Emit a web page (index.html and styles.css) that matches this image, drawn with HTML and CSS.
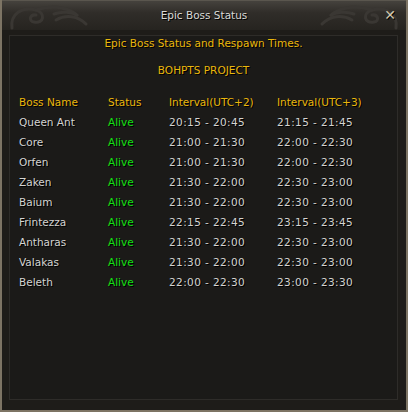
FILE: index.html
```html
<!DOCTYPE html>
<html lang="en">
<head>
    <meta charset="UTF-8">
    <title>Epic Boss Status</title>
    <link rel="stylesheet" href="styles.css">
</head>
<body>
    <div class="window">
        <div class="titlebar">
            <svg class="swirl swirl-left" width="90" height="28" viewBox="0 0 90 28">
                <path d="M6 26 C4 12 16 4 30 8 C40 11 38 22 28 20 C22 19 24 12 30 13" />
                <path d="M30 8 C48 2 64 6 72 14 C66 10 56 9 48 12" />
                <path d="M50 18 C60 12 72 14 80 22" />
            </svg>
            <span class="title">Epic Boss Status</span>
            <svg class="swirl swirl-right" width="90" height="28" viewBox="0 0 90 28">
                <path d="M84 26 C86 12 74 4 60 8 C50 11 52 22 62 20 C68 19 66 12 60 13" />
                <path d="M60 8 C42 2 26 6 18 14 C24 10 34 9 42 12" />
                <path d="M40 18 C30 12 18 14 10 22" />
            </svg>
            <span class="close">&#x2715;</span>
        </div>
        <div class="panel">
            <p class="intro">Epic Boss Status and Respawn Times.</p>
            <p class="project">BOHPTS PROJECT</p>
            <table class="bosses">
                <thead>
                    <tr>
                        <th>Boss Name</th>
                        <th>Status</th>
                        <th>Interval(UTC+2)</th>
                        <th>Interval(UTC+3)</th>
                    </tr>
                </thead>
                <tbody>
                    <tr><td>Queen Ant</td><td class="alive">Alive</td><td class="time">20:15 - 20:45</td><td class="time">21:15 - 21:45</td></tr>
                    <tr><td>Core</td><td class="alive">Alive</td><td class="time">21:00 - 21:30</td><td class="time">22:00 - 22:30</td></tr>
                    <tr><td>Orfen</td><td class="alive">Alive</td><td class="time">21:00 - 21:30</td><td class="time">22:00 - 22:30</td></tr>
                    <tr><td>Zaken</td><td class="alive">Alive</td><td class="time">21:30 - 22:00</td><td class="time">22:30 - 23:00</td></tr>
                    <tr><td>Baium</td><td class="alive">Alive</td><td class="time">21:30 - 22:00</td><td class="time">22:30 - 23:00</td></tr>
                    <tr><td>Frintezza</td><td class="alive">Alive</td><td class="time">22:15 - 22:45</td><td class="time">23:15 - 23:45</td></tr>
                    <tr><td>Antharas</td><td class="alive">Alive</td><td class="time">21:30 - 22:00</td><td class="time">22:30 - 23:00</td></tr>
                    <tr><td>Valakas</td><td class="alive">Alive</td><td class="time">21:30 - 22:00</td><td class="time">22:30 - 23:00</td></tr>
                    <tr><td>Beleth</td><td class="alive">Alive</td><td class="time">22:00 - 22:30</td><td class="time">23:00 - 23:30</td></tr>
                </tbody>
            </table>
        </div>
    </div>
</body>
</html>
```
FILE: styles.css
```css
html, body {margin: 0; padding: 0; background: #1a1917;}
body {font-family: "DejaVu Sans", sans-serif; font-size: 10.5px;}
.window {
    width: 404px; height: 410px;
    border: 2px solid #7d7464; border-top: 0;
    background: #1e1c19;
    display: flex; flex-direction: column;
}
.titlebar {
    position: relative;
    height: 29px;
    background: linear-gradient(#45423d, #302d29 40%, #262420);
    border-top: 1px solid #5a564e;
    display: flex; align-items: center; justify-content: center;
}
.swirl {position: absolute; top: 1px;}
.swirl path {fill: none; stroke: #3a3733; stroke-width: 3; stroke-linecap: round;}
.swirl-left {left: 4px;}
.swirl-right {right: 4px;}
.title {color: #d9d9d6; font-size: 10.5px; text-shadow: 1px 1px 0 #000; position: relative; top: -1px;}
.close {
    position: absolute; right: 10px; top: 6px;
    color: #cfc7ad; font-size: 14px; font-weight: bold;
    text-shadow: 1px 1px 0 #000;
}
.panel {
    margin: 5px 8px 0 7px;
    height: 363px;
    border: 1px solid #2e2c29;
    background: #1b1a18;
    color: #d4d4d2;
    text-shadow: 1px 1px 0 #000;
}
.intro, .project {margin: 0; text-align: center; color: #eab70c;}
.intro {height: 27px; padding-top: 1px;}
.project {height: 28px;}
.bosses {border-collapse: collapse; margin-left: 9px;}
.bosses th, .bosses td {padding: 0; height: 20px; text-align: left; font-weight: normal;}
.bosses th {color: #eab70c;}
.bosses th:nth-child(1) {width: 89px;}
.bosses th:nth-child(2) {width: 61px;}
.bosses th:nth-child(3) {width: 108px;}
.alive {color: #14e014;}
.time {letter-spacing: 0.4px;}
```
